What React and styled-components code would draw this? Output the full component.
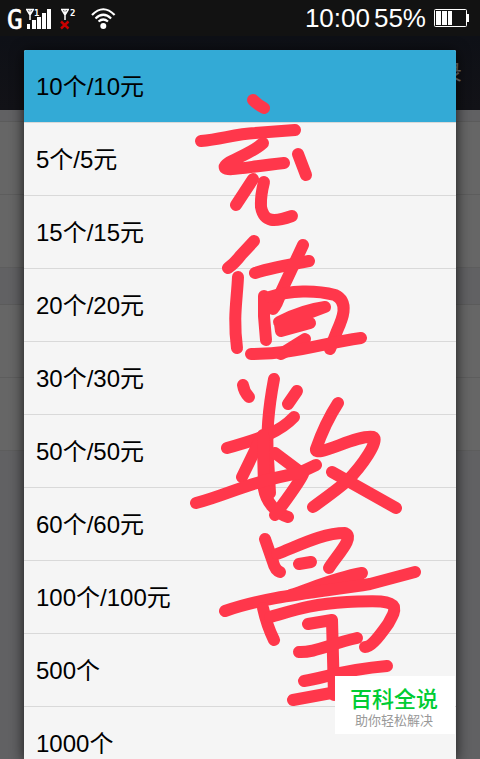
import React, { useState } from 'react'
import styled, { createGlobalStyle } from 'styled-components'

const options = [
  '10个/10元',
  '5个/5元',
  '15个/15元',
  '20个/20元',
  '30个/30元',
  '50个/50元',
  '60个/60元',
  '100个/100元',
  '500个',
  '1000个',
];

// handwritten note, one entry per pen stroke
const strokes = [
  // 充
  'M253 100 Q258 105 264 108',
  'M201 141 C222 139 235 134 255 133 L295 130',
  'M263 143 C249 156 222 162 225 168 C228 171 240 168 284 163',
  'M298 154 L306 175',
  'M253 179 L236 205',
  'M264 182 C260 198 261 202 261 207 C264 223 275 222 292 216',
  // 值
  'M254 241 L241 255 Q234 264 228 268',
  'M238 277 C237 300 233 317 237 348',
  'M255 273 C267 269 287 265 309 261',
  'M303 245 L281 292 Q277 305 273 309',
  'M264 296 L264 316 L266 340',
  'M270 297 C290 290 316 290 335 295 C350 302 342 320 337 331 L330 349',
  'M279 322 C295 314 310 309 325 307 L280 324 L281 331 L310 323',
  'M305 339 L281 354 L296 346',
  'M251 354 C296 354 318 344 361 338',
  // 数
  'M243 385 Q244 392 249 397',
  'M274 379 C270 400 266 433 268 458 L270 493',
  'M297 391 L288 404',
  'M294 417 C280 432 262 438 227 448',
  'M259 442 L242 477',
  'M263 435 C263 466 264 475 264 489 C266 501 275 513 288 517',
  'M275 453 L303 474 Q299 483 275 515',
  'M196 503 C230 494 245 483 299 473 L316 465',
  'M338 403 Q325 423 316 449 C314 459 358 434 373 437 C380 440 362 466 347 481 Q338 489 313 507',
  'M332 472 L396 508',
  // 量
  'M265 539 L273 562 Q275 570 280 572',
  'M277 554 C300 545 323 533 345 533 C355 537 338 554 329 568',
  'M299 564 L311 562',
  'M362 573 C335 578 315 587 291 595 L330 588 L358 579',
  'M225 611 C267 596 320 592 370 584 L415 572',
  'M263 608 Q267 626 274 640',
  'M270 617 C292 611 310 604 347 602 C375 601 390 600 394 607 C395 612 393 615 388 624 C376 641 370 647 365 647',
  'M308 624 L332 620 L334 695',
  'M299 652 C314 653 330 644 357 638',
  'M304 681 C325 678 340 670 387 666',
  'M293 700 L342 691',
];

const Global = createGlobalStyle`
  * {
    box-sizing: border-box;
  }
  body {
    margin: 0;
    background: #616163;
    font-family: 'Liberation Sans', 'Noto Sans CJK SC', sans-serif;
  }
`;

const Screen = styled.div`
  position: relative;
  min-height: 100vh;
  overflow: hidden;
`;

const StatusBar = styled.header`
  display: flex;
  align-items: center;
  justify-content: space-between;
  height: 36px;
  padding-right: 11px;
  background: #121212;
`;

const StatusInfo = styled.div`
  display: flex;
  align-items: center;
  gap: 4px;
  color: #ffffff;
  font-size: 26px;
  line-height: 36px;
`;

const Battery = styled.svg`
  margin-left: 4px;
`;

const TitleBar = styled.div`
  display: flex;
  align-items: center;
  justify-content: flex-end;
  height: 74px;
  padding: 0 18px 6px 0;
  background: linear-gradient(#0e1016, #121217);
`;

const RecordButton = styled.button`
  padding: 0;
  border: 0;
  background: none;
  color: #777777;
  font: inherit;
  font-size: 22px;
`;

const Group = styled.div`
  margin-top: ${props => props.$gap}px;
  border-top: 1px solid #5b5b5b;
`;

const Field = styled.div`
  height: 73px;
  background: #666666;
  border-bottom: 1px solid #5d5d5d;
`;

const Dialog = styled.div`
  position: absolute;
  top: 50px;
  right: 24px;
  bottom: 0;
  left: 24px;
  overflow: hidden;
  border-radius: 2px 2px 0 0;
  background: #f5f5f5;
  box-shadow: 0 2px 14px rgba(0, 0, 0, 0.75);
`;

const OptionList = styled.ul`
  margin: 0;
  padding: 0;
  list-style: none;
`;

const Option = styled.button`
  display: block;
  width: 100%;
  height: 73px;
  padding: 0 12px 4px;
  border: 0;
  border-bottom: 1px solid #d9d9d9;
  background: ${props => props.$active ? '#33aad6' : '#f5f5f5'};
  color: #000000;
  font: inherit;
  font-size: 24px;
  text-align: left;
`;

const Note = styled.svg`
  position: absolute;
  top: 90px;
  left: 186px;
  pointer-events: none;
`;

const Badge = styled.div`
  position: absolute;
  right: 25px;
  bottom: 25px;
  display: flex;
  flex-direction: column;
  align-items: center;
  width: 120px;
  padding: 11px 2px 5px 0;
  background: #ffffff;
`;

const BadgeTitle = styled.strong`
  color: #00cc33;
  font-size: 22px;
  font-weight: 500;
  line-height: 26px;
`;

const BadgeText = styled.span`
  color: #999999;
  font-size: 13px;
  line-height: 16px;
`;

const Antenna = ({ x }) => (
  <path
    d={`M${x} 9.5 H${x + 8} M${x + 1} 10 L${x + 4} 15 L${x + 7} 10 M${x + 4} 10 V20`}
    fill="none"
    stroke="#fff"
    strokeWidth="1.5"
  />
);

const SignalIcons = () => (
  <svg width="120" height="36" viewBox="0 0 120 36" aria-label="信号">
    <g fill="#fff" fontFamily="DejaVu Sans Mono">
      <text x="7" y="29" fontSize="26" stroke="#fff" strokeWidth="0.6">G</text>
      <text x="34" y="16" fontSize="9" fontWeight="700">1</text>
      <text x="70" y="16" fontSize="9" fontWeight="700">2</text>
    </g>
    <Antenna x={26} />
    <g fill="#fff">
      <rect x="27" y="24" width="3" height="5" />
      <rect x="32" y="20" width="4" height="9" />
      <rect x="37" y="17" width="4" height="12" />
      <rect x="42" y="13" width="4" height="16" />
      <rect x="47" y="9" width="4" height="20" />
    </g>
    <Antenna x={61} />
    <path d="M61 21.5 L68.5 28.5 M68.5 21.5 L61 28.5" stroke="#c90000" strokeWidth="2.4" />
    <g fill="none" stroke="#fff" strokeWidth="2.2">
      <path d="M92 15 Q103.3 3.5 114.6 15" />
      <path d="M95.5 18.5 Q103.3 11 111.1 18.5" />
      <path d="M98.5 21.5 Q103.3 17.5 108 21.5" />
    </g>
    <circle cx="103.3" cy="26" r="3" fill="#fff" />
  </svg>
);

const BatteryIcon = () => (
  <Battery width="35" height="18" viewBox="0 0 35 18" aria-label="电量">
    <rect x="0.5" y="0.5" width="32" height="17" rx="1" fill="none" stroke="#fff" />
    <path d="M33 5 h2 v8 h-2 z M2 2 h5 v14 h-5 z M8 2 h5 v14 h-5 z M14 2 h4 v14 h-4 z" fill="#fff" />
  </Battery>
);

const App = () => {
  const [selected, setSelected] = useState(0);

  return (
    <Screen>
      <Global />
      <StatusBar>
        <SignalIcons />
        <StatusInfo>
          <span>10:00</span>
          <span>55%</span>
          <BatteryIcon />
        </StatusInfo>
      </StatusBar>
      <TitleBar>
        <RecordButton>记录</RecordButton>
      </TitleBar>
      <Group $gap={11}>
        <Field />
        <Field />
      </Group>
      <Group $gap={36}>
        <Field />
        <Field />
      </Group>
      <Dialog role="dialog" aria-label="充值数量">
        <OptionList>
          {options.map((label, i) => (
            <li key={label}>
              <Option $active={i === selected} onClick={() => setSelected(i)}>
                {label}
              </Option>
            </li>
          ))}
        </OptionList>
      </Dialog>
      <Note width="240" height="620" viewBox="186 90 240 620" aria-hidden="true">
        <g fill="none" stroke="#ff374b" strokeWidth="12" strokeLinecap="round" strokeLinejoin="round">
          {strokes.map(d => <path key={d} d={d} />)}
        </g>
      </Note>
      <Badge>
        <BadgeTitle>百科全说</BadgeTitle>
        <BadgeText>助你轻松解决</BadgeText>
      </Badge>
    </Screen>
  )
}

export default App
